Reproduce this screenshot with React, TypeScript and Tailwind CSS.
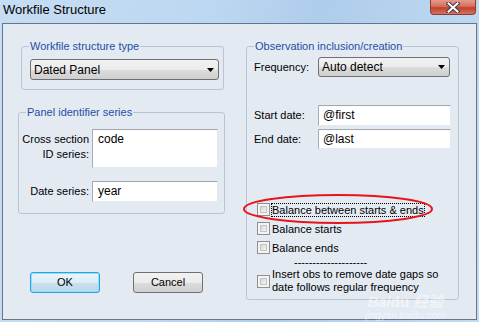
import React from 'react';

// Win7-style "Workfile Structure" dialog

const FONT = { fontFamily: '"Liberation Sans", Arial, sans-serif' };

const GroupBox: React.FC<{ label: string; labelLeft: string; className: string; children?: React.ReactNode }> = ({
  label,
  labelLeft,
  className,
  children,
}) => (
  <div className={`relative border border-[#b9c5d3] rounded-[3px] ${className}`}>
    <span className={`absolute top-[-7px] ${labelLeft} px-[1px] bg-[#e4eaf2] text-[#1d4fa6] leading-[13px]`}>
      {label}
    </span>
    {children}
  </div>
);

const Combo: React.FC<{ value: string; className: string }> = ({ value, className }) => (
  <div
    className={`flex items-center justify-between border border-[#707070] rounded-[3px] bg-[linear-gradient(#f2f2f2_0%,#ebebeb_50%,#dddddd_51%,#cfcfcf_100%)] pl-[3px] pr-[4px] ${className}`}
  >
    <span className="text-[12px] leading-[14px] text-black">{value}</span>
    <svg width="7" height="4" viewBox="0 0 7 4">
      <path d="M0 0h7L3.5 4z" fill="#000" />
    </svg>
  </div>
);

const TextBox: React.FC<{ value: string; className: string }> = ({ value, className }) => (
  <div
    className={`bg-white border border-t-[#a3a6ad] border-l-[#a9acb3] border-r-[#e3e9ef] border-b-[#e3e9ef] text-[12px] text-black ${className}`}
  >
    {value}
  </div>
);

const Check: React.FC = () => (
  <div className="w-[13px] h-[13px] shrink-0 border border-[#8e8f8f] bg-[#f4f4f4] p-[2px]">
    <div className="w-full h-full border border-[#c3c3c3] bg-[linear-gradient(135deg,#d6d6d6,#f6f6f6)]" />
  </div>
);

const CheckRow: React.FC<{ label: string; focused?: boolean }> = ({ label, focused }) => (
  <div className="h-[19px] flex items-center">
    <Check />
    <span
      className={`ml-[1px] leading-[12px] border ${focused ? 'border-dotted border-black' : 'border-transparent'}`}
    >
      {label}
    </span>
  </div>
);

const App: React.FC = () => {
  return (
    <div
      className="relative w-[479px] h-[322px] overflow-hidden bg-[linear-gradient(100deg,#c6ddf3_0%,#bcd7f1_40%,#aecdeb_60%,#c2dbf2_100%)] text-[11px] text-black"
      style={FONT}
    >
      {/* Title bar */}
      <div className="h-[23px] flex justify-between">
        <div className="pl-[3px] text-[13px] leading-[20px] text-black">Workfile Structure</div>
        <div className="mr-[3px] w-[46px] h-[15px] rounded-b-[4px] border border-t-0 border-[#8a3b33] bg-[linear-gradient(#e59a8c_0%,#d5705e_45%,#c0402b_55%,#d4735f_100%)] flex items-center justify-center">
          <svg width="14" height="11" viewBox="0 0 14 11">
            <path d="M2.5 1.5l9 8M11.5 1.5l-9 8" stroke="#3b3b4b" strokeWidth="4" strokeLinecap="square" />
            <path d="M2.5 1.5l9 8M11.5 1.5l-9 8" stroke="#ffffff" strokeWidth="2" strokeLinecap="square" />
          </svg>
        </div>
      </div>

      {/* Client area */}
      <div className="relative ml-[2px] w-[475px] h-[297px] border border-[#66768a] bg-[#e4eaf2] flex pl-[15px]">
        {/* Left column */}
        <div className="w-[207px] flex flex-col">
          <GroupBox label="Workfile structure type" labelLeft="left-[7px]" className="mt-[22px] ml-[3px] w-[203px] h-[44px] pt-[12px] pl-[8px]">
            <Combo value="Dated Panel" className="w-[189px] h-[21px]" />
          </GroupBox>

          <GroupBox label="Panel identifier series" labelLeft="left-[7px]" className="mt-[22px] w-[207px] h-[102px] pt-[16px]">
            <div className="flex">
              <div className="w-[70px] text-right pt-[3px] leading-[15px]">
                Cross section
                <br />
                ID series:
              </div>
              <TextBox value="code" className="ml-[3px] w-[126px] h-[39px] pl-[5px] pt-[2px] leading-[15px]" />
            </div>
            <div className="flex items-center mt-[13px]">
              <div className="w-[70px] text-right leading-[13px]">Date series:</div>
              <TextBox value="year" className="ml-[3px] w-[126px] h-[21px] pl-[5px] leading-[19px]" />
            </div>
          </GroupBox>

          <div className="flex mt-[58px] ml-[12px] gap-[33px]">
            <button className="w-[70px] h-[21px] rounded-[3px] border border-[#2f9fe0] bg-[linear-gradient(#eaf6fc_0%,#dcecf5_50%,#c9e0ee_51%,#bcd8ea_100%)] shadow-[inset_0_0_0_1px_#8ee0fb] text-[11px] leading-[19px] text-black">
              OK
            </button>
            <button className="w-[70px] h-[21px] rounded-[3px] border border-[#707070] bg-[linear-gradient(#f2f2f2_0%,#ebebeb_50%,#dddddd_51%,#cfcfcf_100%)] text-[11px] leading-[19px] text-black">
              Cancel
            </button>
          </div>
        </div>

        {/* Right column */}
        <GroupBox label="Observation inclusion/creation" labelLeft="left-[7px]" className="ml-[21px] mt-[22px] w-[213px] h-[254px] pt-[10px] pl-[7px]">
          <div className="flex items-center">
            <div className="w-[64px] leading-[13px]">Frequency:</div>
            <Combo value="Auto detect" className="w-[132px] h-[20px]" />
          </div>

          <div className="flex items-center mt-[28px]">
            <div className="w-[64px] leading-[13px]">Start date:</div>
            <TextBox value="@first" className="w-[133px] h-[21px] pl-[4px] leading-[19px]" />
          </div>
          <div className="flex items-center mt-[3px]">
            <div className="w-[64px] leading-[13px]">End date:</div>
            <TextBox value="@last" className="w-[133px] h-[20px] pl-[4px] leading-[18px]" />
          </div>

          <div className="mt-[51px] pl-[3px]">
            <CheckRow label="Balance between starts & ends" focused />
            <CheckRow label="Balance starts" />
            <CheckRow label="Balance ends" />
            <div className="h-[10px] leading-[10px] pl-[37px]">--------------------</div>
            <div className="flex items-center mt-[1px]">
              <Check />
              <div className="ml-[2px] leading-[13px]">
                Insert obs to remove date gaps so
                <br />
                date follows regular frequency
              </div>
            </div>
          </div>
        </GroupBox>

        {/* Red annotation ellipse */}
        <svg className="absolute left-[238px] top-[169px]" width="194" height="32" viewBox="0 0 194 32">
          <ellipse cx="97" cy="16" rx="94" ry="14" fill="none" stroke="#e8141b" strokeWidth="2" />
        </svg>

        {/* Watermark */}
        <div className="absolute left-[362px] top-[270px] text-white/50 pointer-events-none flex flex-col items-center">
          <div className="text-[15px] leading-[15px] font-bold italic" style={{ fontFamily: '"Liberation Sans", "Noto Sans CJK SC", sans-serif' }}>
            Bai<span className="not-italic">du</span> 经验
          </div>
          <div className="text-[10px] leading-[11px] mt-[1px] text-white/50">jingyan.baidu.com</div>
        </div>
      </div>
    </div>
  );
};

export default App;
